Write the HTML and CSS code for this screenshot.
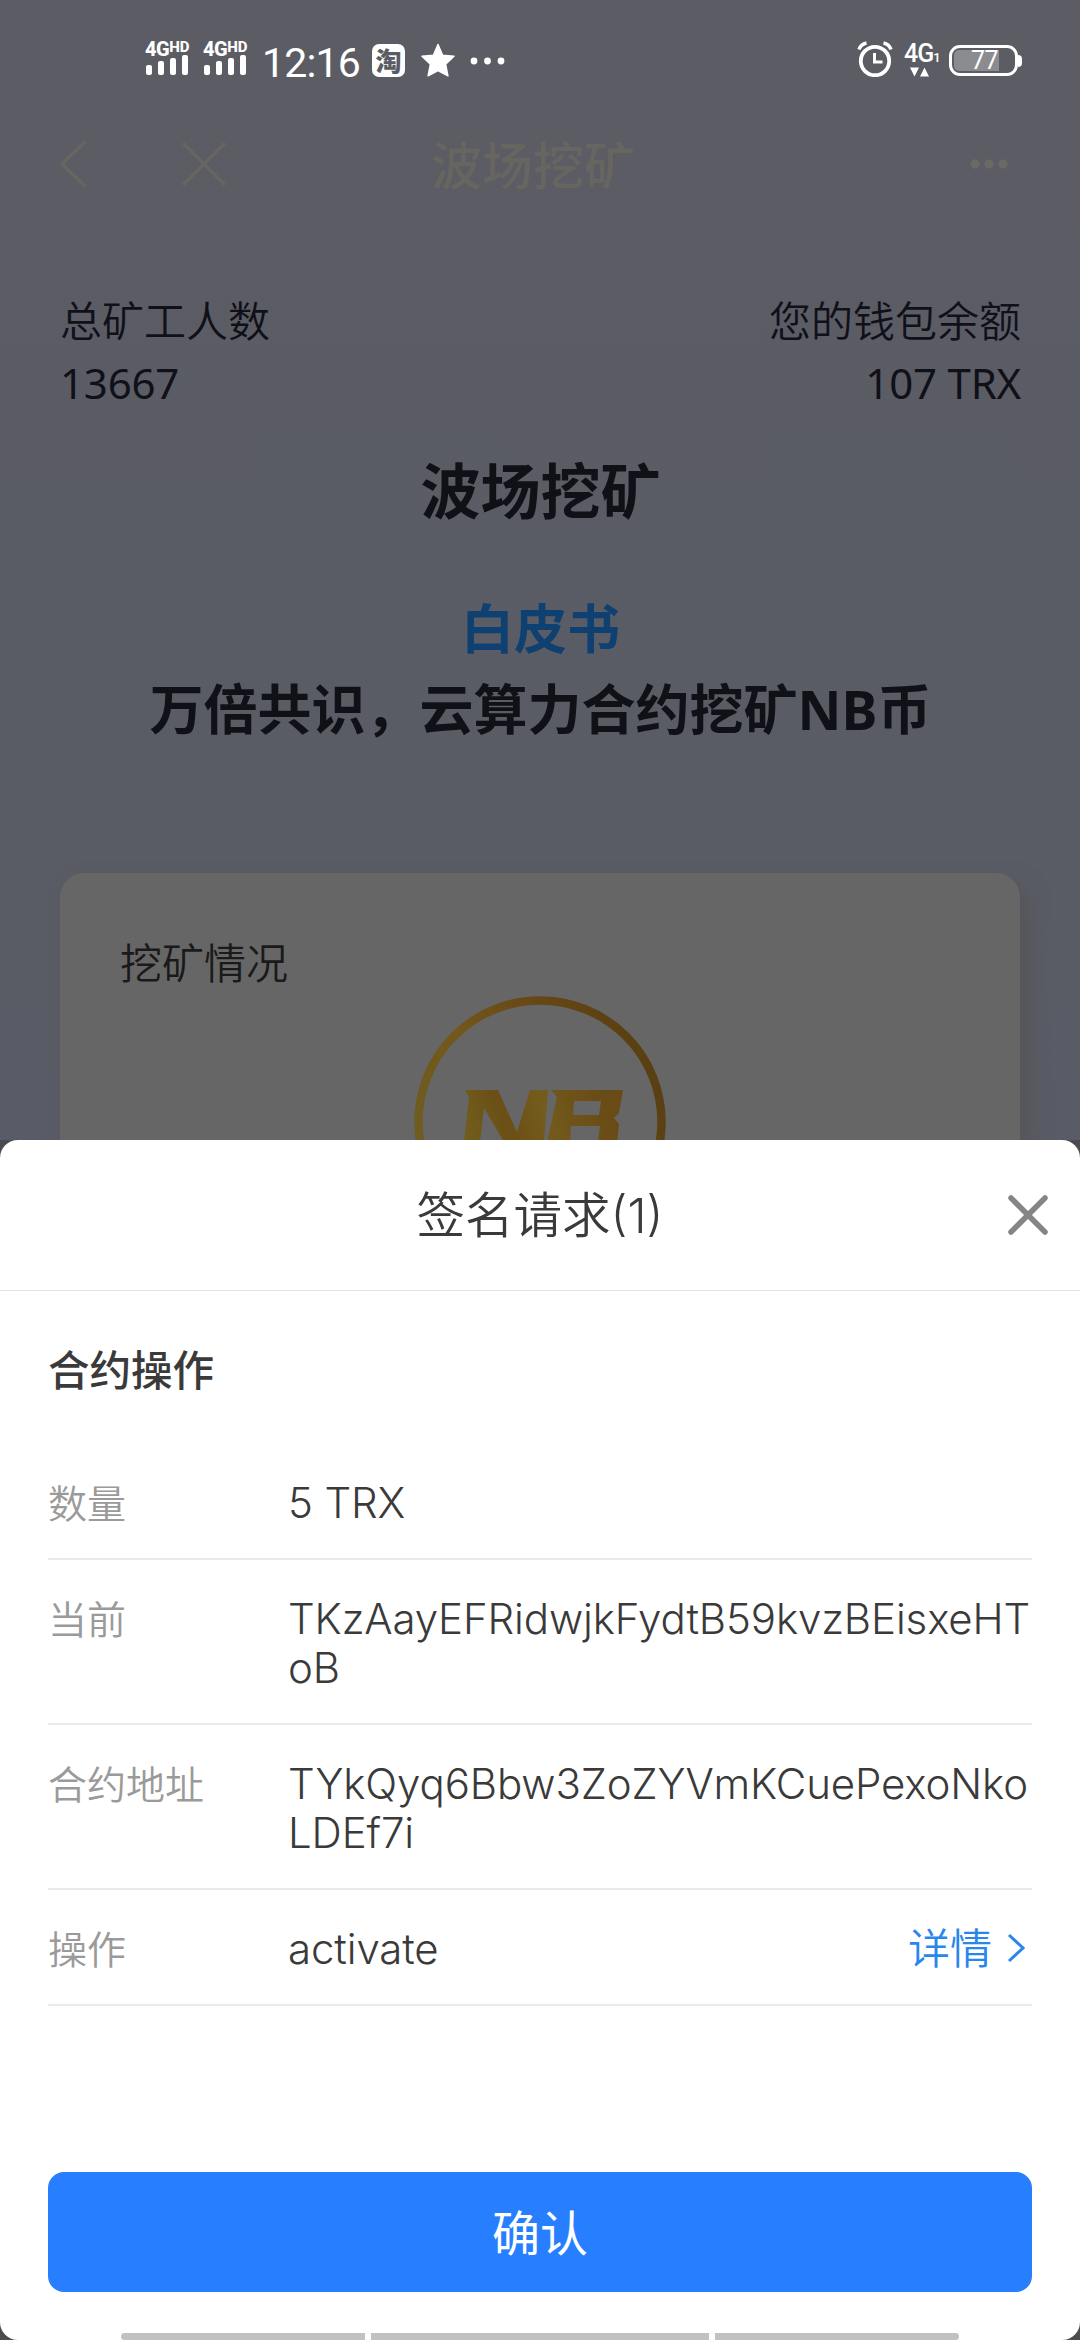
FILE: index.html
```html
<!DOCTYPE html>
<html lang="zh-CN">
<head>
<meta charset="utf-8">
<title>波场挖矿</title>
<link rel="stylesheet" href="styles.css">
</head>
<body>
<div class="screen">
  <header class="status">
    <div class="signal"><span class="net">4G<b>HD</b></span><div class="bars"><i class="b1"></i><i class="b2"></i><i class="b3"></i><i class="b4"></i></div></div>
    <div class="signal second"><span class="net">4G<b>HD</b></span><div class="bars"><i class="b1"></i><i class="b2"></i><i class="b3"></i><i class="b4"></i></div></div>
    <span class="time">12:16</span>
    <span class="app">淘</span>
    <svg class="star" width="34" height="34" viewBox="0 0 34 34"><path d="M17 1.500l4.600 10.700 11.400 1.100-8.400 7.900 2.300 11.600L17 27.500 7.100 32.800l2.300-11.600L1 13.300l11.400-1.100z" fill="#fff" stroke="#fff" stroke-width="1.500" stroke-linejoin="round"/></svg>
    <svg class="more" width="36" height="8" viewBox="0 0 36 8" fill="#fff"><circle cx="4" cy="4" r="3.400"/><circle cx="17.500" cy="4" r="3.400"/><circle cx="31" cy="4" r="3.400"/></svg>
    <svg class="alarm" width="36" height="36" viewBox="0 0 36 36" fill="none" stroke="#fff"><circle cx="18" cy="20" r="14.200" stroke-width="3.800"/><path d="M17.500 12v9h8" stroke-width="3"/><path d="M2 8.500Q4 3 9.500 2M34 8.500Q32 3 26.500 2" stroke-width="3.500"/></svg>
    <div class="data"><span class="gen">4G<small>1</small></span><svg width="20" height="10" viewBox="0 0 20 10" fill="#fff"><path d="M0 .5h9L4.500 9.500zM10 9.500h9L14.500.5z"/></svg></div>
    <div class="battery"><span class="level">77</span></div><i class="nub"></i>
  </header>

  <nav class="nav">
    <svg width="30" height="50" viewBox="0 0 30 50"><path d="M27 2L3 25l24 23"/></svg>
    <svg class="close" width="46" height="46" viewBox="0 0 46 46"><path d="M2 2l42 42M44 2L2 44"/></svg>
    <span class="nav-title">波场挖矿</span>
    <svg class="dots" width="38" height="12" viewBox="0 0 38 12"><circle cx="5" cy="6" r="4.700"/><circle cx="19" cy="6" r="4.700"/><circle cx="33" cy="6" r="4.700"/></svg>
  </nav>

  <section class="stats">
    <div>总矿工人数<span class="figure">13667</span></div>
    <div class="right">您的钱包余额<span class="figure">107 TRX</span></div>
  </section>
  <section class="hero">
    <h1>波场挖矿</h1>
    <a class="paper">白皮书</a>
    <p>万倍共识，云算力合约挖矿NB币</p>
  </section>
  <section class="card">
    <h2>挖矿情况</h2>
    <svg class="coin" width="256" height="148" viewBox="0 0 256 148">
      <defs>
        <linearGradient id="ring" x1="0" x2="1" y1=".6" y2=".2"><stop offset="0" stop-color="#6e5c20"/><stop offset=".3" stop-color="#73571d"/><stop offset=".6" stop-color="#684815"/><stop offset="1" stop-color="#573e11"/></linearGradient>
        <linearGradient id="foil" gradientUnits="userSpaceOnUse" x1="50" y1="145" x2="200" y2="95"><stop offset="0" stop-color="#715f1d"/><stop offset=".3" stop-color="#6b4f16"/><stop offset=".55" stop-color="#745c1d"/><stop offset="1" stop-color="#694b15"/></linearGradient>
      </defs>
      <circle cx="128" cy="128" r="121.500" fill="none" stroke="url(#ring)" stroke-width="8.500"/>
      <g fill="url(#foil)">
        <path d="M53 96H86L105 138L118 96H136L132 148H92L72 114L68 148H52L57 103z"/>
        <path fill-rule="evenodd" d="M149 96H221L217 119L212 124L217 130L215 148H196L198 132H169L168 148H145L155 103zM172 107L171 121H197L199 107z" transform="translate(-10 0)"/>
      </g>
    </svg>
  </section>
</div>

<main class="sheet">
  <header class="sheet-head">
    <h3>签名请求(1)</h3>
    <svg class="x" width="42" height="42" viewBox="0 0 42 42"><path d="M4 4l34 34M38 4L4 38"/></svg>
  </header>
  <h4>合约操作</h4>
  <div class="row"><span class="label">数量</span><span class="value">5 TRX</span></div>
  <div class="row"><span class="label">当前</span><span class="value">TKzAayEFRidwjkFydtB59kvzBEisxeHT<br>oB</span></div>
  <div class="row"><span class="label">合约地址</span><span class="value">TYkQyq6Bbw3ZoZYVmKCuePexoNko<br>LDEf7i</span></div>
  <div class="row"><span class="label">操作</span><span class="value">activate</span><a class="detail">详情<svg width="20" height="30" viewBox="0 0 20 30"><path d="M3 2l14 13L3 28"/></svg></a></div>
  <button class="confirm">确认</button>
  <div class="handles"><i></i><i></i><i></i></div>
</main>
</body>
</html>
```
FILE: styles.css
```css
* { box-sizing: border-box; }
body {
  margin: 0;
  width: 1080px;
  height: 2340px;
  overflow: hidden;
  background: #4b4c52;
  font-family: "Noto Sans", "Noto Sans CJK SC", sans-serif;
}
h1, h2, h3, h4, p { margin: 0; }
svg { display: block; flex: none; }
.screen {
  height: 1140px;
  overflow: hidden;
  background: linear-gradient(#5b5c64 0, #5a5c65 800px, #595c66 1140px);
}

/* status bar */
.status { display: flex; height: 120px; padding: 0 0 0 145px; color: #fff; align-items: flex-start; font-family: Roboto, sans-serif; }
.signal { width: 46px; margin-top: 38px; }
.second { margin-left: 12px; }
.net { display: block; height: 17px; font: 800 20px/19px Roboto, sans-serif; letter-spacing: -.5px; white-space: nowrap; }
.net b { font-size: 15px; font-weight: 800; vertical-align: 4px; letter-spacing: 0; }
.bars { display: flex; gap: 6px; padding-left: 1px; height: 20px; align-items: flex-end; }
.bars i { width: 6px; border-radius: 2px; background: #fff; }
.b1 { height: 10px; } .b2 { height: 14px; } .b3 { height: 17px; } .b4 { height: 20px; }
.time { width: 99px; margin: 39px 0 0 13px; font-size: 41px; line-height: 48px; letter-spacing: -.8px; white-space: nowrap; }
.app { width: 33px; height: 33px; margin: 44px 0 0 11px; border-radius: 7px; background: #fff; color: #5a5c65; font: 900 26px/32px "Noto Sans CJK SC", sans-serif; text-align: center; }
.star { margin: 43px 0 0 16px; }
.more { margin: 57px 0 0 15px; }
.alarm { margin: 41px 0 0 351px; }
.data { width: 36px; margin: 41px 0 0 11px; }
.data svg { margin: 3px 0 0 6px; }
.gen { display: block; height: 23px; font: 500 25px/25px Roboto, sans-serif; letter-spacing: -1px; white-space: nowrap; }
.gen small { font-size: 13px; }
.battery { width: 69px; height: 31px; margin: 45px 0 0 9px; padding: 2px; border: 3px solid #fff; border-radius: 11px; }
.level { display: block; width: 45px; height: 21px; padding-right: 1px; border-radius: 5px 0 0 5px; background: #8b8c90; text-align: right; font-size: 25px; line-height: 21px; letter-spacing: -.5px; }
.nub { width: 4px; height: 12px; margin-top: 55px; border-radius: 0 4px 4px 0; background: #fff; }

/* navigation */
.nav { display: flex; height: 88px; padding: 0 72px 0 59px; align-items: center; color: #666560; fill: none; stroke: #666560; stroke-width: 3.5; }
.close { margin-left: 92px; }
.nav-title { margin-left: 204px; padding-top: 2px; font-size: 51px; line-height: 72px; font-weight: 500; stroke: none; }
.dots { margin-left: auto; fill: #6a6963; stroke: none; }

/* page */
.stats { display: flex; justify-content: space-between; padding: 82px 59px 0 60px; font-size: 42px; font-weight: 350; line-height: 62px; color: #101019; }
.figure { display: block; font-weight: 400; letter-spacing: -.2px; }
.right { text-align: right; }
.hero { display: flex; flex-direction: column; align-items: center; padding: 35px 0 0 1px; color: #101017; font-weight: 700; }
.hero h1 { font-size: 60px; line-height: 84px; }
.paper { margin-top: 55px; font-size: 53px; line-height: 81px; color: #0e4071; }
.hero p { font-size: 54px; line-height: 80px; }
.card { height: 400px; margin: 124px 60px 0; padding: 60px 60px 0; border-radius: 24px; background: #666; box-shadow: 10px 10px 20px rgba(85, 85, 85, .8); }
.card h2 { font-size: 42px; line-height: 60px; font-weight: 350; color: #1a1a1a; }
.coin { margin: 1px auto 0; }

/* signing sheet */
.sheet { display: flex; flex-direction: column; height: 1200px; padding: 0 48px; border-radius: 18px; background: #fff; color: #3a3a3a; }
.sheet-head { display: flex; height: 151px; margin: 0 -48px; padding: 0 31px 0 73px; align-items: center; border-bottom: 1px solid #e4e4e4; }
.sheet-head h3 { flex: 1; padding-top: 2px; text-align: center; font-family: Inter, "Noto Sans CJK SC", sans-serif; font-size: 48.5px; line-height: 60px; font-weight: 350; }
.x { fill: none; stroke: #858585; stroke-width: 5.5; stroke-linecap: round; }
.sheet h4 { height: 153px; padding-top: 49px; font-size: 41.5px; line-height: 60px; font-weight: 500; }
.row { display: flex; padding: 34px 0 31px; border-bottom: 2px solid #ebebeb; line-height: 49px; align-items: flex-start; }
.label { flex: none; width: 240px; font-size: 39px; font-weight: 350; color: #9a9a9a; }
.value { flex: 1; font-family: Inter, sans-serif; font-size: 42px; font-weight: 350; letter-spacing: -.12px; white-space: nowrap; }
.detail { display: flex; gap: 14px; padding-right: 6px; margin-top: -1px; align-items: center; font-size: 42px; font-weight: 350; color: #2887ec; }
.detail svg { fill: none; stroke: #2887ec; stroke-width: 3; }
.confirm { height: 120px; margin: 166px 0 0; padding: 2px 0 0; border: 0; border-radius: 16px; background: #277fff; color: #fff; font-family: inherit; font-size: 48px; line-height: 70px; }
.handles { display: flex; gap: 6px; margin: auto 73px 0; height: 7px; }
.handles i { flex: 244; background: #c1c1c1; }
.handles i:first-child { border-radius: 4px 0 0 4px; }
.handles i:nth-child(2) { flex: 338; }
.handles i:last-child { border-radius: 0 4px 4px 0; }
```
